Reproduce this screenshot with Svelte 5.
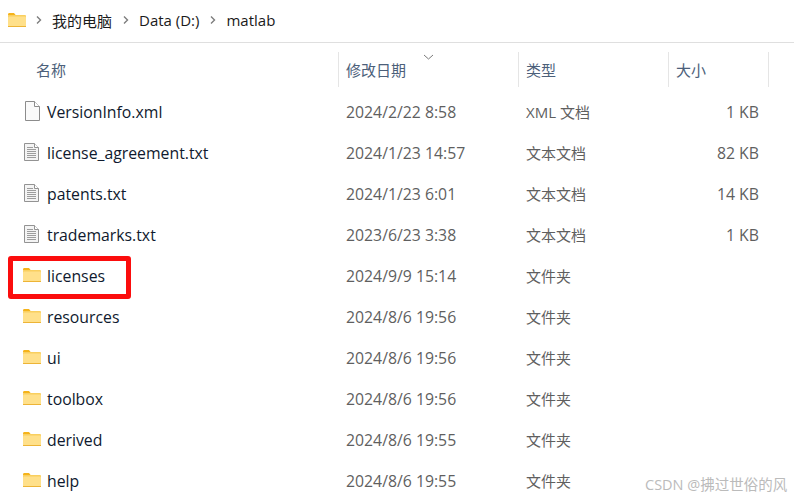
<script>
  const files = [
    { name: "VersionInfo.xml", date: "2024/2/22 8:58", type: "XML 文档", size: "1 KB", icon: "blank" },
    { name: "license_agreement.txt", date: "2024/1/23 14:57", type: "文本文档", size: "82 KB", icon: "text" },
    { name: "patents.txt", date: "2024/1/23 6:01", type: "文本文档", size: "14 KB", icon: "text" },
    { name: "trademarks.txt", date: "2023/6/23 3:38", type: "文本文档", size: "1 KB", icon: "text" },
    { name: "licenses", date: "2024/9/9 15:14", type: "文件夹", size: "", icon: "folder" },
    { name: "resources", date: "2024/8/6 19:56", type: "文件夹", size: "", icon: "folder" },
    { name: "ui", date: "2024/8/6 19:56", type: "文件夹", size: "", icon: "folder" },
    { name: "toolbox", date: "2024/8/6 19:56", type: "文件夹", size: "", icon: "folder" },
    { name: "derived", date: "2024/8/6 19:55", type: "文件夹", size: "", icon: "folder" },
    { name: "help", date: "2024/8/6 19:55", type: "文件夹", size: "", icon: "folder" },
  ];
  const crumbs = ["我的电脑", "Data (D:)", "matlab"];
</script>

{#snippet folder()}
  <svg class="folder" width="19" height="16" viewBox="0 0 19 16">
    <path d="M1 2.5Q1 1 2 1H7L9 3.5H1Z" fill="#f5b31b" />
    <rect x="1" y="3" width="18" height="12" rx="1" fill="#f9cf5f" />
    <rect x="1" y="4.5" width="18" height="10.5" rx="1" fill="#ffe08a" />
    <rect x="1" y="14" width="18" height="1" fill="#edb436" />
  </svg>
{/snippet}

{#snippet chevron()}
  <svg width="6" height="10" viewBox="0 0 6 10">
    <path d="M1 1.5L4.5 5L1 8.5" fill="none" stroke="#7d7d7d" stroke-width="1.4" />
  </svg>
{/snippet}

<div class="window">
  <nav class="crumbs">
    {@render folder()}
    {#each crumbs as crumb}
      {@render chevron()}
      <span>{crumb}</span>
    {/each}
  </nav>

  <div class="head">
    <span class="col first">名称</span>
    <span class="col">修改日期
      <svg class="sort" width="11" height="6" viewBox="0 0 11 6">
        <path d="M1 1L5.5 5L10 1" fill="none" stroke="#7a7a7a" stroke-width="1" />
      </svg>
    </span>
    <span class="col">类型</span>
    <span class="col">大小</span>
  </div>

  <div class="rows">
    {#each files as file}
      <div class="row">
        <div class="name">
          <span class="icon">
            {#if file.icon === "folder"}
              {@render folder()}
            {:else if file.icon === "blank"}
              <svg width="16" height="20" viewBox="0 0 16 20">
                <path d="M1.5 .5H10.5L15.5 5.5V19.5H1.5Z" fill="#fafafa" stroke="#8c8c8c" />
                <path d="M10.5 .5V5.5H15.5" fill="#fff" stroke="#8c8c8c" />
              </svg>
            {:else}
              <svg width="15" height="18" viewBox="0 0 15 18">
                <path d="M.5 .5H10.5L14.5 4.5V17.5H.5Z" fill="#f4f4f4" stroke="#939393" />
                <path d="M10.5 .5V4.5H14.5" fill="#fff" stroke="#939393" />
                <path d="M3 4.5H9M3 6.5H12M3 8.5H12M3 10.5H12M3 12.5H12M3 14.5H12" stroke="#9d9d9d" />
              </svg>
            {/if}
          </span>
          <span class="filename">{file.name}</span>
        </div>
        <span class="cell">{file.date}</span>
        <span class="cell type">{file.type}</span>
        <span class="cell size">{file.size}</span>
      </div>
    {/each}
  </div>

  <div class="highlight"></div>
  <div class="watermark">CSDN @拂过世俗的风</div>
</div>

<style>
  :global(body) {
    background: #fff;
    overflow: hidden;
  }

  .window {
    position: relative;
    width: 794px;
    height: 498px;
    overflow: hidden;
    font-family: "Open Sans", "Noto Sans CJK SC", sans-serif;
    font-size: 15px;
  }

  .crumbs {
    display: flex;
    align-items: center;
    gap: 10.5px;
    height: 43px;
    padding-left: 7px;
    padding-bottom: 2px;
    box-sizing: border-box;
    border-bottom: 1px solid #dfdfdf;
    color: #1a1a1a;
  }

  .crumbs > .folder {
    margin-right: -1px;
  }

  .head {
    display: grid;
    grid-template-columns: 339px 180px 150px 100px;
    height: 35px;
    margin-top: 9px;
    color: #4c607a;
  }

  .col {
    position: relative;
    display: flex;
    align-items: center;
    padding-left: 7px;
    border-right: 1px solid #e5e5e5;
  }

  .col.first {
    padding-left: 36px;
  }

  .sort {
    position: absolute;
    left: 84px;
    top: 2px;
  }

  .rows {
    margin-top: 5px;
  }

  .row {
    display: grid;
    grid-template-columns: 338px 180px 150px 91px;
    align-items: center;
    height: 41px;
    color: #5f5f5f;
    font-size: 15.8px;
  }

  .name {
    display: flex;
    align-items: center;
    padding-left: 22px;
  }

  .icon {
    display: flex;
    justify-content: center;
    width: 19px;
    margin-top: -3px;
    margin-right: 6px;
  }

  .filename {
    margin-top: -2px;
    color: #0f1a2e;
  }

  .cell {
    margin-top: -2px;
    padding-left: 8px;
  }

  .type {
    font-size: 15px;
  }

  .size {
    text-align: right;
    padding: 0;
  }

  .highlight {
    position: absolute;
    left: 8px;
    top: 256px;
    width: 123px;
    height: 43px;
    box-sizing: border-box;
    border: 5px solid #fb0d0d;
    border-radius: 3px;
  }

  .watermark {
    position: absolute;
    left: 645px;
    top: 473px;
    font-size: 14.5px;
    color: #bbb;
    white-space: nowrap;
  }
</style>
